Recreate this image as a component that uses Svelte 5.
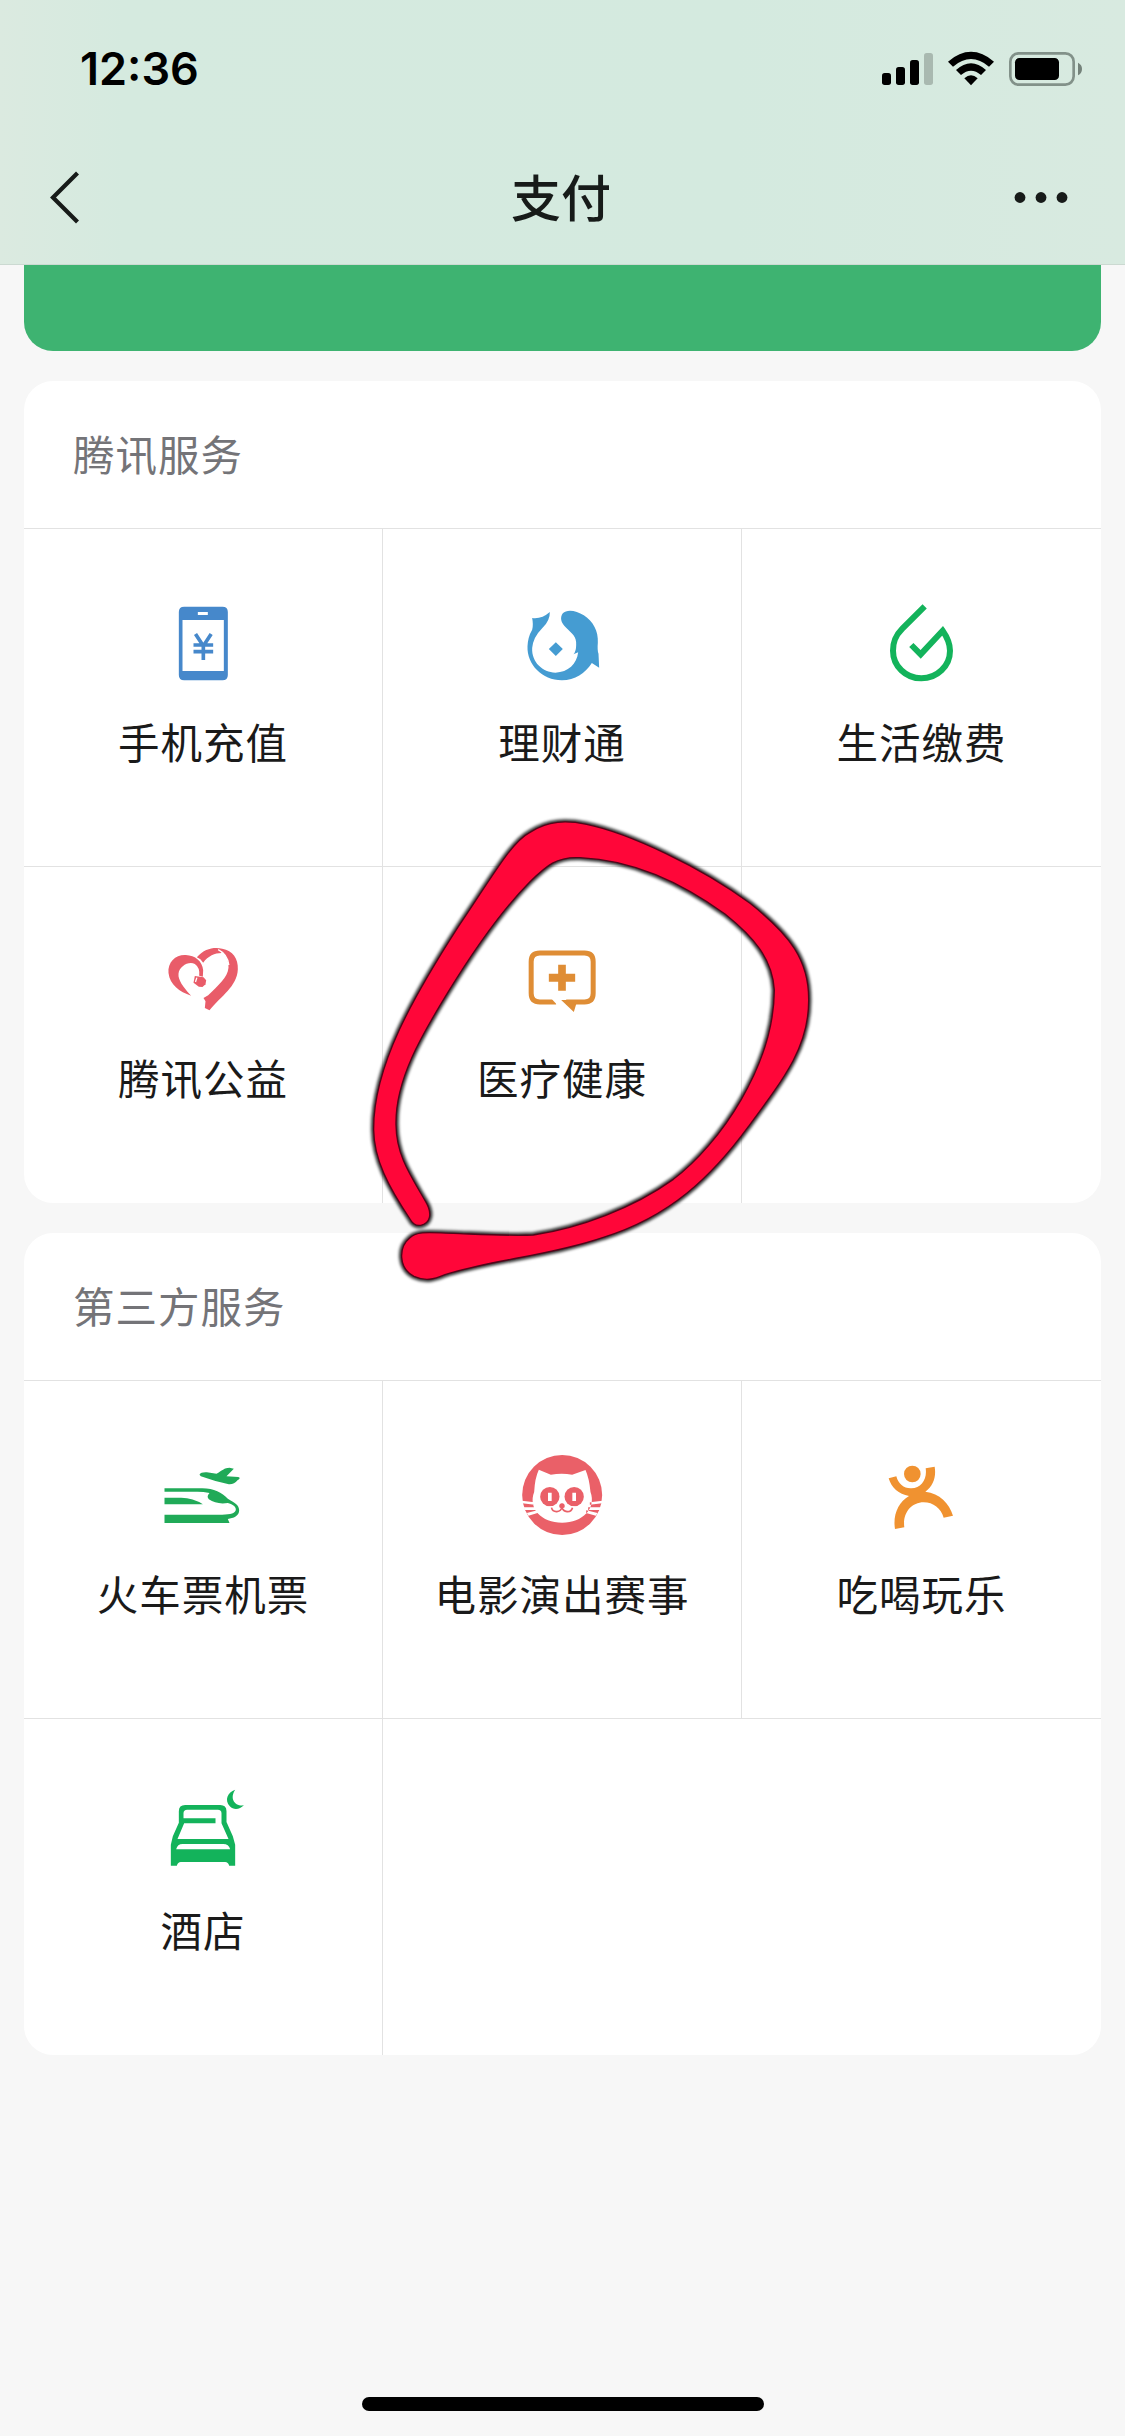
<script>
  const sections = [
    {
      title: '腾讯服务',
      rows: [
        [
          { label: '手机充值', icon: 'phone', box: '-4.5 -6 390 330' },
          { label: '理财通', icon: 'fish', box: '-7.5 -6 390 330' },
          { label: '生活缴费', icon: 'drop', box: '-9 -6 390 330' }
        ],
        [
          { label: '腾讯公益', icon: 'heart', box: '-4.5 18 390 330' },
          { label: '医疗健康', icon: 'medical', box: '-7.5 18 390 330' },
          { label: '', icon: '', box: '0 0 390 330' }
        ]
      ]
    },
    {
      title: '第三方服务',
      rows: [
        [
          { label: '火车票机票', icon: 'train', box: '-4.5 0 390 330' },
          { label: '电影演出赛事', icon: 'cat', box: '-7.5 0 390 330' },
          { label: '吃喝玩乐', icon: 'person', box: '-9 0 390 330' }
        ],
        [{ label: '酒店', icon: 'bed', box: '-4.5 24 390 330' }, { label: '', icon: '', box: '0 0 390 330' }]
      ]
    }
  ];
</script>

<div class="screen">
  <header>
    <div class="status">
      <span class="time">12:36</span>
      <svg class="signals" width="240" height="80" viewBox="0 0 720 240">
        <rect x="66" y="129" width="27" height="36" rx="8" />
        <rect x="108" y="111" width="27" height="54" rx="8" />
        <rect x="150" y="90" width="27" height="75" rx="8" />
        <rect x="192" y="69" width="27" height="96" rx="8" fill="#a9b9b0" />
        <path d="M264 95Q333 36 402 95L387 110Q333 64 279 110Z" />
        <path d="M288 120Q333 79 378 120L363 135Q333 109 303 135Z" />
        <path d="M313 145Q333 126 353 145L333 166Z" />
        <rect x="451" y="70" width="190" height="94" rx="25" fill="none" stroke="#829189" stroke-width="8" />
        <rect x="465" y="84" width="132" height="66" rx="13" />
        <path d="M654 98Q666 104 666 117Q666 130 654 136Z" fill="#74827a" />
      </svg>
    </div>
    <div class="nav">
      <svg width="60" height="60" viewBox="0 0 60 60"><path d="M33.500 5L9 29.500L33.500 54" fill="none" stroke="#171b19" stroke-width="4.200" /></svg>
      <h1>支付</h1>
      <svg width="60" height="60" viewBox="0 0 60 60" fill="#171b19"><circle cx="9" cy="29.500" r="5.400" /><circle cx="30" cy="29.500" r="5.400" /><circle cx="51" cy="29.500" r="5.400" /></svg>
    </div>
  </header>

  <main>
    <div class="banner"></div>
    {#each sections as section}
      <section>
        <h2>{section.title}</h2>
        {#each section.rows as row}
          <div class="row">
            {#each row as item}
              <div class="cell">
                {#if item.icon}
                  <svg class="icon" width="130" height="110" viewBox={item.box}>
                    {#if item.icon === 'phone'}
                      <path fill="#4688cb" fill-rule="evenodd" d="M134 50H249Q265 50 265 66V255Q265 271 249 271H134Q118 271 118 255V66Q118 50 134 50ZM129 90V243H253V90ZM175 66V75H205V66Z" />
                      <path d="M168 132L191.500 168L215 132M162 165H221M162 185H221M191.500 165V210" fill="none" stroke="#4688cb" stroke-width="11" />
                    {:else if item.icon === 'fish'}
                      <g fill="#459cd2">
                        <path d="M98 84Q126 88 151 66Q152 92 128 115Q101 142 98 174C96 217 130 247 168 248C206 247 232 222 236 187L222 193Q230 184 230 165C232 139 217 130 200 113C183 98 181 82 190 70C202 57 230 61 253 76C281 94 297 124 295 158Q293 181 297 191L299 233L277 219C257 250 227 271 187 271C128 271 82 224 84 169Q85 141 98 119Q102 105 98 84Z" />
                        <path d="M169 157L190 177L169 198L148 177Z" />
                      </g>
                    {:else if item.icon === 'drop'}
                      <path d="M194 49L127 116C104 139 99 158 99 182C99 228 137 265 184 265C231 265 270 228 270 182C270 158 262 142 248 122L182 193L154 165" fill="none" stroke="#13b35b" stroke-width="18" />
                    {:else if item.icon === 'heart'}
                      <g fill="#e95c69">
                        <path d="M150 222L155 227C120 216 91 194 87 159C84 125 110 103 139 105C167 106 189 124 191 151L190 170L179 167Q182 143 166 132C148 122 119 139 117 161C115 180 132 201 150 222Z" />
                        <path d="M166 168L192 172L200 181L198 193L189 201L178 200L162 188Z" />
                        <path d="M172 112C195 86 222 81 248 86C280 92 297 116 295 148C293 200 244 229 210 271L196 264L198 244L192 234L206 226C236 195 264 174 267 143C268 124 260 104 244 92L246 99C226 99 206 108 191 128Q184 116 172 112Z" />
                      </g>
                      <path d="M236 89Q264 103 268 135" fill="none" stroke="#fff" stroke-width="4" />
                      <path d="M172 173L168 186" fill="none" stroke="#fff" stroke-width="4" />
                    {:else if item.icon === 'medical'}
                      <g transform="translate(-450 -360)">
                        <path d="M620 606H571Q545 606 545 580V485Q545 459 571 459H705Q731 459 731 485V580Q731 606 705 606H650" fill="none" stroke="#df8d35" stroke-width="15" />
                        <path fill="#fff" d="M604 594L626 618H641L640 603L632 594Z" />
                        <path fill="#df8d35" d="M635 600H685L680 613L673 636ZM626 494H649V521H677V545H649V572H626V545H598V521H626Z" />
                      </g>
                    {:else if item.icon === 'train'}
                      <g fill="#20aa58">
                        <path d="M75 145H188C224 145 247 158 265 176C285 188 299 194 299 211C299 228 282 235 265 237L270 249H75V224H248C273 224 289 220 289 208C289 199 278 192 265 189Q231 194 208 178Q200 169 210 159Q192 155 174 155H75Z" />
                        <path d="M75 173H125Q161 173 190 193H75Z" />
                        <path d="M180 104Q184 96 202 97L231 101C247 92 255 83 270 83L283 86L261 109L296 111Q306 114 294 121Q284 134 268 133Q225 124 184 109Z" />
                      </g>
                    {:else if item.icon === 'cat'}
                      <circle cx="188" cy="165" r="120" fill="#ea6068" />
                      <path fill="#fff" d="M118 89L154 104Q187 98 218 104L258 90Q269 114 273 156C291 206 249 248 188 248C126 248 85 206 104 156Q106 114 118 89ZM67 182L105 187V194L68 190ZM72 202L110 202V210L76 210ZM82 219L114 211V219L87 227ZM309 182L271 187V194L308 190ZM304 202L266 202V210L301 210ZM294 219L260 211V219L289 227Z" />
                      <g fill="#ea6068"><circle cx="151" cy="170" r="29" /><circle cx="224" cy="170" r="29" /><circle cx="187.500" cy="198" r="8" /></g>
                      <path d="M151 158V183M224 158V183" stroke="#fff" stroke-width="11" />
                      <path d="M153 199C156 220 185 222 187 204C191 222 218 220 222 199" fill="none" stroke="#fff" stroke-width="14" />
                      <path d="M156 203C160 220 185 218 187 201C191 218 214 220 219 203" fill="none" stroke="#ea6068" stroke-width="5" />
                      <circle cx="187.500" cy="198" r="7" fill="#ea6068" />
                    {:else if item.icon === 'person'}
                      <g fill="#f09230">
                        <circle cx="157" cy="102" r="25" />
                        <path d="M86 115L109 109C115 132 132 146 154 145C184 143 202 118 197 85L224 80C229 111 220 138 196 155C239 160 268 190 279 227L251 233C243 205 220 187 191 187C153 187 127 221 133 262L105 267C98 226 115 186 147 168C116 163 94 143 86 115Z" />
                      </g>
                    {:else if item.icon === 'bed'}
                      <path d="M118 158V124Q118 105 137 105H242Q261 105 261 124V156L280 199L287 224V287H269Q266 276 257 276H124Q115 276 112 287H94V224L100 199ZM132 145H228V160H134L114 207H267L246 160V130Q246 119 235 119H143Q132 119 132 130ZM110 238H272Q268 222 251 222H129Q114 222 110 238Z" fill="#13b35b" fill-rule="evenodd" />
                      <path d="M287 59C270 84 284 109 313 106C301 119 282 121 271 109C254 91 264 66 287 59Z" fill="#13b35b" />
                    {/if}
                  </svg>
                  <span>{item.label}</span>
                {/if}
              </div>
            {/each}
          </div>
        {/each}
      </section>
    {/each}
  </main>
  <div class="home"></div>

  <svg class="marker" width="480" height="500" viewBox="0 0 1440 1500">
    <defs>
      <path id="loop" d="M180 1257C115 1160 72 1078 71 990C69 800 190 590 325 380C430 225 485 125 540 97C595 61 650 61 710 73C835 99 1052 200 1200 310C1320 405 1377 480 1376 600C1377 735 1310 825 1195 980C1085 1130 960 1250 760 1312C600 1367 420 1380 285 1424C250 1439 225 1444 192 1429C145 1405 145 1342 179 1314C203 1292 235 1298 330 1301C430 1305 490 1308 550 1305C690 1284 850 1224 970 1138C1110 1032 1272 795 1273 570C1267 475 1210 410 1125 342C990 246 850 180 690 173C620 169 590 197 540 245C450 336 375 445 295 575C215 705 135 840 138 975C139 1065 180 1124 227 1205C249 1242 240 1270 212 1276Q191 1279 180 1257Z" />
    </defs>
    <use class="halo" href="#loop" />
    <use class="ink" href="#loop" />
  </svg>
</div>

<style>
  :global(body) { margin: 0; background: #f7f7f7; }
  .screen {
    position: relative;
    display: flex;
    flex-direction: column;
    box-sizing: border-box;
    width: 1125px;
    height: 2436px;
    padding-bottom: 25px;
    overflow: hidden;
    background: #f7f7f7;
    font-family: "Noto Sans CJK SC", sans-serif;
    color: #1a1a1a;
  }
  header {
    height: 265px;
    box-sizing: border-box;
    border-bottom: 1px solid #cbd9d1;
    background: linear-gradient(90deg, #dbeae0 0, #d5eadf 11%, #d4eadf 65%, #d8eae0 100%);
  }
  .status { display: flex; justify-content: space-between; height: 110px; padding: 30px 25px 0 80px; box-sizing: border-box; }
  .time { font: 600 45px/78px Inter, sans-serif; letter-spacing: 0; color: #000; }
  .nav { display: flex; justify-content: space-between; align-items: center; height: 60px; margin-top: 58px; padding: 0 54px 0 44px; }
  .nav svg { flex: none; }
  h1 { margin: -6px 0 0 7px; font-size: 50px; font-weight: 500; line-height: 60px; color: #171b19; }
  main { display: flex; flex-direction: column; gap: 30px; padding: 0 24px; }
  .banner { height: 86px; border-radius: 0 0 29px 29px; background: #3eb371; }
  section { height: 822px; border-radius: 29px; background: #fff; overflow: hidden; }
  h2 { height: 147px; margin: 0; padding-left: 49px; font-size: 41.5px; font-weight: 400; line-height: 144px; letter-spacing: 1px; color: #747478; }
  .row { display: flex; height: 338px; box-sizing: border-box; border-top: 1px solid #e2e2e2; }
  .cell { display: flex; flex-direction: column; align-items: center; box-sizing: border-box; width: 359px; padding-top: 59px; border-right: 1px solid #e2e2e2; }
  .cell:last-child { border-right: 0; }
  .icon { flex: none; }
  .cell span { margin-top: 13px; font-size: 41.5px; line-height: 60px; letter-spacing: 1px; white-space: nowrap; }
  .row:last-child span { margin-top: 11px; }
  .home { width: 402px; height: 14px; margin: auto auto 0; border-radius: 7px; background: #000; }
  .marker { position: absolute; left: 350px; top: 800px; overflow: visible; }
  .halo { fill: none; stroke: #000; stroke-width: 16; opacity: 0.8; filter: blur(5px); }
  .ink { fill: #ff0639; stroke: #520419; stroke-width: 4; stroke-linejoin: round; }
</style>
